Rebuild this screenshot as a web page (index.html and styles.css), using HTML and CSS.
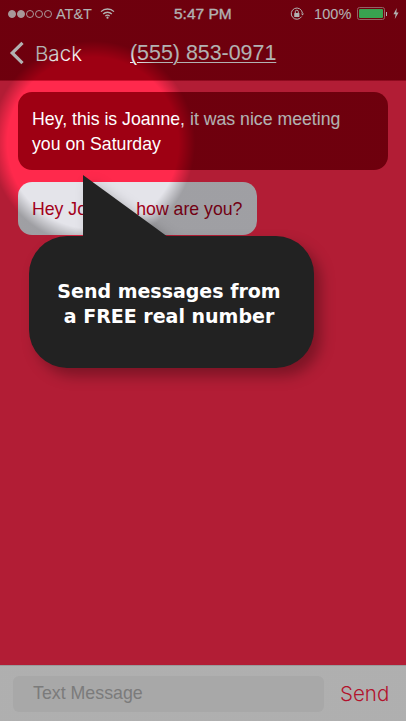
FILE: index.html
```html
<!DOCTYPE html>
<html lang="en">
<head>
<meta charset="utf-8">
<title>Messages</title>
<link rel="stylesheet" href="styles.css">
</head>
<body>
<div class="screen">
  <header class="top">
    <div class="status">
      <div class="status-left">
        <span class="dots"><i class="dot on"></i><i class="dot on"></i><i class="dot"></i><i class="dot"></i><i class="dot"></i></span>
        <span class="carrier">AT&amp;T</span>
        <svg class="wifi" viewBox="0 0 15 11" width="15" height="11"><path d="M1 3.6a9.4 9.4 0 0 1 13 0M3.2 6a6.2 6.2 0 0 1 8.6 0M5.3 8.1a3.2 3.2 0 0 1 4.4 0" fill="none" stroke="#fff" stroke-width="1.3"/><circle cx="7.5" cy="9.7" r="1.1" fill="#fff"/></svg>
      </div>
      <span class="time">5:47 PM</span>
      <div class="status-right">
        <svg class="lock" viewBox="0 0 14 14" width="14" height="14"><path d="M11.6 9.6A5.6 5.6 0 1 1 12.4 6" fill="none" stroke="#fff" stroke-width="1"/><path d="M11 6.6h3l-1.5 1.8z" fill="#fff"/><rect x="4.2" y="6" width="5.2" height="4" rx=".6" fill="#fff"/><path d="M5.3 6V4.7a1.5 1.5 0 0 1 3 0V6" fill="none" stroke="#fff" stroke-width="1"/></svg>
        <span class="pct">100%</span>
        <span class="battery"><span class="charge"></span></span>
        <span class="tip"></span>
        <svg class="bolt" viewBox="0 0 6 11" width="6" height="11"><path d="M3.8 0 .4 6.2h2.2L1.8 11l3.8-6.6H3.3z" fill="#fff"/></svg>
      </div>
    </div>
    <nav class="nav">
      <svg class="chevron" viewBox="0 0 16 24" width="16" height="24"><path d="M13.5 1.8 3.2 12l10.3 10.2" fill="none" stroke="#fff" stroke-width="3.2"/></svg>
      <span class="back">Back</span>
      <span class="title">(555) 853-0971</span>
    </nav>
  </header>

  <main class="thread">
    <div class="bubble bubble-in">Hey, this is Joanne, it was nice meeting you on Saturday</div>
    <div class="bubble bubble-out">Hey Joanne, how are you?</div>
  </main>

  <footer class="composer">
    <div class="field">Text Message</div>
    <span class="send">Send</span>
  </footer>

  <div class="dim"></div>

  <div class="tooltip">
    <svg class="tail" viewBox="0 0 85 62" width="85" height="62"><path d="M0 0V62H85Z" fill="#222"/></svg>
    <p class="tooltip-text">Send messages from<br>a FREE real number</p>
  </div>
</div>
</body>
</html>
```
FILE: styles.css
```css
* { box-sizing: border-box; }
html, body { margin: 0; padding: 0; }
body { width: 406px; height: 721px; overflow: hidden; font-family: "Liberation Sans", Arial, sans-serif; }

.screen {
  position: relative;
  width: 406px;
  height: 721px;
  display: flex;
  flex-direction: column;
  background: #ff294c;
  overflow: hidden;
}

.top {
  height: 81px;
  flex: none;
  background: #9e0013;
  border-bottom: 1px solid #cc0f2c;
  color: #fff;
}

.status {
  height: 27px;
  padding: 0 7px 0 8px;
  display: flex;
  align-items: center;
  justify-content: space-between;
  position: relative;
  font-size: 15px;
}
.status-left, .status-right { display: flex; align-items: center; }
.dots { display: flex; gap: 1px; margin-right: 4px; }
.dot { width: 8px; height: 8px; border-radius: 50%; border: 1px solid #fff; opacity: .85; }
.dot.on { background: #fff; }
.carrier { font-size: 14.5px; margin-right: 8px; }
.time { position: absolute; left: 174px; font-size: 15.5px; -webkit-text-stroke: .3px #fff; }
.lock { margin-right: 10px; }
.pct { font-size: 14.5px; margin-right: 5px; letter-spacing: .1px; }
.battery { width: 28px; height: 13px; border: 1.5px solid #d68a90; border-radius: 2.5px; padding: 1px; display: flex; }
.charge { flex: 1; background: #52e872; border-radius: 1px; }
.tip { width: 1.5px; height: 4px; background: #fff; margin: 0 6px 0 1px; }

.nav { height: 53px; display: flex; align-items: center; padding: 0 0 0 9px; }
.chevron { margin-right: 10px; margin-bottom: 1px; }
.back { font-family: Inter, "Liberation Sans", sans-serif; font-weight: 300; font-size: 20.6px; width: 95px; }
.title { font-size: 21.4px; text-decoration: underline; text-underline-offset: 2px; text-decoration-thickness: 1px; }

.thread {
  flex: 1;
  padding: 11px 18px 0;
  display: flex;
  flex-direction: column;
  align-items: flex-start;
  gap: 12px;
}
.bubble { font-size: 17.7px; line-height: 25px; border-radius: 14px; padding: 15px 14px 14px; }
.bubble-in { width: 370px; height: 78px; background: #9e0013; color: #fff; padding-right: 30px; }
.bubble-out { height: 53px; background: #e4e4ea; color: #a3001a; padding-right: 15px; }

.composer {
  height: 56px;
  flex: none;
  display: flex;
  align-items: center;
  padding: 0 16px 0 13px;
  background: #fbfbfb;
  border-top: 1px solid #dcdcdc;
}
.field {
  width: 311px;
  height: 36px;
  flex: none;
  margin-right: 16px;
  padding-left: 20px;
  background: #f0f0f0;
  border-radius: 6px;
  line-height: 34px;
  font-size: 17.8px;
  color: #b0b0b0;
}
.send { font-size: 20.5px; font-family: Inter, "Liberation Sans", sans-serif; font-weight: 300; color: #ff1a40; }

.dim {
  position: absolute;
  inset: 0;
  pointer-events: none;
  background: radial-gradient(circle 102px at 93px 143px, rgba(0,0,0,0) 0, rgba(0,0,0,0) 84%, rgba(0,0,0,.3) 100%);
}

.tooltip {
  position: absolute;
  left: 29px;
  top: 236px;
  width: 285px;
  height: 132px;
  background: #222;
  border-radius: 38px;
  display: flex;
  align-items: center;
  justify-content: center;
  filter: drop-shadow(7px 8px 7px rgba(0,0,0,.3));
}
.tail { position: absolute; left: 54px; top: -61px; }
.tooltip-text {
  margin: 0;
  color: #fff;
  text-align: center;
  font-family: "DejaVu Sans", sans-serif;
  font-weight: 700;
  font-size: 19px;
  line-height: 25px;
  padding: 3px 5px 0 0;
}
```
